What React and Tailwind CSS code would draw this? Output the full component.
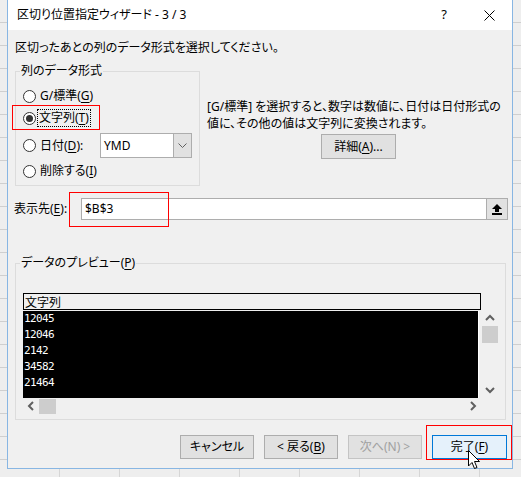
import React from "react";

const jp = "font-['Noto_Sans','Noto_Sans_CJK_JP',sans-serif]";

function Radio({ checked }) {
  return (
    <span className="w-[13px] h-[13px] rounded-full border border-[#333] bg-white flex items-center justify-center shrink-0">
      {checked && <span className="w-[7px] h-[7px] rounded-full bg-[#333]" />}
    </span>
  );
}

function U({ children }) {
  return <span className="underline underline-offset-[2px] decoration-[1px]">{children}</span>;
}

function Chevron({ dir, className = "" }) {
  const paths = {
    up: "M1 6 L5 2 L9 6",
    down: "M1 2 L5 6 L9 2",
    left: "M6 1 L2 5 L6 9",
    right: "M2 1 L6 5 L2 9",
  };
  const vb = dir === "up" || dir === "down" ? "0 0 10 8" : "0 0 8 10";
  const w = dir === "up" || dir === "down" ? 10 : 8;
  const h = dir === "up" || dir === "down" ? 8 : 10;
  return (
    <svg width={w} height={h} viewBox={vb} className={className}>
      <path d={paths[dir]} fill="none" stroke="#606060" strokeWidth="2" />
    </svg>
  );
}

export default function App() {
  const rows = ["12045", "12046", "2142", "34582", "21464"];
  return (
    <div
      className={`w-[521px] h-[477px] overflow-hidden pl-[7px] bg-[#eeeeee] bg-[repeating-linear-gradient(to_bottom,transparent_0px,transparent_22px,#cfcfcf_22px,#cfcfcf_23px),repeating-linear-gradient(to_right,transparent_0px,transparent_59px,#d6d6d6_59px,#d6d6d6_60px)] ${jp} text-[12px] text-black [font-feature-settings:'palt']`}
    >
      <div className="relative w-[506px] h-[469px] flex flex-col border-x border-b border-[#88b6e3]">
        {/* title bar */}
        <div className="h-[30px] bg-white flex items-center shrink-0">
          <span className="pl-[9px] leading-[16px]">区切り位置指定ウィザード - 3 / 3</span>
          <span className="ml-auto w-[46px] h-[30px] flex items-center justify-center text-[13px]">?</span>
          <span className="w-[45px] h-[30px] flex items-center justify-center">
            <svg width="11" height="11" viewBox="0 0 11 11">
              <path d="M0.5 0.5 L10.5 10.5 M10.5 0.5 L0.5 10.5" stroke="#000" strokeWidth="1" />
            </svg>
          </span>
        </div>

        {/* body */}
        <div className="flex-1 bg-[#f0f0f0] flex flex-col">
          <div className="mt-[10px] ml-[7px] h-[16px] leading-[16px]">
            区切ったあとの列のデータ形式を選択してください。
          </div>

          {/* top section */}
          <div className="flex mt-[7px]">
            <fieldset className="ml-[7px] w-[185px] h-[123px] border border-[#dcdcdc] m-0 p-0 min-w-0">
              <legend className="ml-[4px] px-[1px] leading-[16px] h-[16px]">列のデータ形式</legend>
              <div className="mt-[7px] h-[20px] flex items-center pl-[7px]">
                <Radio />
                <span className="ml-[4px] leading-[16px]">
                  G/標準(<U>G</U>)
                </span>
              </div>
              <div className="relative mt-[2px] h-[20px] flex items-center pl-[7px]">
                <Radio checked />
                <span className="ml-[2px] px-[1px] leading-[16px] outline outline-1 outline-dotted outline-[#000] outline-offset-[0px]">
                  文字列(<U>T</U>)
                </span>
                <span className="absolute left-[-4px] top-[-3px] w-[88px] h-[25px] border border-[#ff0000]" />
              </div>
              <div className="mt-[5px] h-[25px] flex items-center pl-[7px]">
                <Radio />
                <span className="ml-[4px] w-[60px] leading-[16px]">
                  日付(<U>D</U>):
                </span>
                <div className="w-[92px] h-[25px] bg-white border border-[#adadad] flex items-center">
                  <span className="pl-[3px] flex-1 leading-[16px]">YMD</span>
                  <span className="w-[18px] h-[23px] bg-[#e1e1e1] border-l border-[#adadad] flex items-center justify-center">
                    <svg width="9" height="6" viewBox="0 0 9 6">
                      <path d="M0.5 0.5 L4.5 4.5 L8.5 0.5" fill="none" stroke="#606060" strokeWidth="1" />
                    </svg>
                  </span>
                </div>
              </div>
              <div className="mt-[3px] h-[20px] flex items-center pl-[7px]">
                <Radio />
                <span className="ml-[4px] leading-[16px]">
                  削除する(<U>I</U>)
                </span>
              </div>
            </fieldset>

            <div className="flex-1 pl-[7px] flex flex-col">
              <div className="mt-[35px] leading-[17px]">
                <div>[G/標準] を選択すると、数字は数値に、日付は日付形式の</div>
                <div>値に、その他の値は文字列に変換されます。</div>
              </div>
              <button className="mt-[2px] ml-[114px] w-[75px] h-[25px] bg-[#e1e1e1] border border-[#adadad] flex items-center justify-center leading-[16px]">
                詳細(<U>A</U>)...
              </button>
            </div>
          </div>

          {/* destination */}
          <div className="mt-[12px] h-[22px] flex items-center">
            <span className="pl-[6px] w-[73px] leading-[16px]">
              表示先(<U>E</U>):
            </span>
            <div className="relative w-[427px] h-[22px] bg-white border border-[#adadad] flex items-center">
              <span className="pl-[3px] flex-1 leading-[16px]">$B$3</span>
              <span className="w-[21px] h-[20px] bg-[#e1e1e1] border-l border-[#adadad] flex items-center justify-center">
                <svg width="10" height="11" viewBox="0 0 10 11">
                  <polygon points="0,5 5,0 10,5" fill="#000" />
                  <rect x="3" y="5" width="4" height="3" fill="#000" />
                  <rect x="0" y="9" width="10" height="2" fill="#000" />
                </svg>
              </span>
              <span className="absolute left-[-13px] top-[-7px] w-[100px] h-[35px] border border-[#ff0000]" />
            </div>
          </div>

          {/* preview */}
          <fieldset className="mt-[35px] ml-[7px] w-[491px] h-[165px] border border-[#dcdcdc] m-0 p-0 min-w-0">
            <legend className="ml-[4px] px-[1px] leading-[16px] h-[16px]">
              データのプレビュー(<U>P</U>)
            </legend>
            <div className="mt-[22px] ml-[7px] flex">
              <div className="w-[458px] flex flex-col">
                <div className="h-[17px] border-t border-x border-b border-black flex items-center pl-[1px] leading-[14px] [font-feature-settings:normal] font-['Noto_Sans_CJK_JP',sans-serif]">
                  文字列
                </div>
                <div className="h-[87px] mt-[1px] flex">
                  <div className="w-[455px] bg-black flex flex-col pl-[1px] font-['DejaVu_Sans_Mono',monospace] text-[11px] tracking-[-0.6px] text-white">
                    {rows.map((r) => (
                      <div key={r} className="h-[16px] leading-[16px]">
                        {r}
                      </div>
                    ))}
                  </div>
                  <div className="w-[1px] bg-white" />
                </div>
                <div className="h-[16px] flex items-center">
                  <span className="w-[16px] h-[16px] flex items-center justify-center">
                    <Chevron dir="left" />
                  </span>
                  <span className="w-[17px] h-[15px] bg-[#cdcdcd]" />
                  <span className="flex-1" />
                  <span className="w-[16px] h-[16px] flex items-center justify-center">
                    <Chevron dir="right" />
                  </span>
                </div>
              </div>
              <div className="ml-[1px] w-[16px] mt-[17px] h-[88px] flex flex-col">
                <span className="h-[16px] flex items-center justify-center">
                  <Chevron dir="up" />
                </span>
                <span className="h-[17px] bg-[#cdcdcd]" />
                <span className="flex-1" />
                <span className="h-[16px] flex items-center justify-center">
                  <Chevron dir="down" />
                </span>
              </div>
            </div>
          </fieldset>

          {/* buttons */}
          <div className="mt-[15px] h-[24px] flex ml-[172px] gap-[10px]">
            <button className="w-[74px] h-[24px] bg-[#e1e1e1] border border-[#adadad] leading-[16px]">
              キャンセル
            </button>
            <button className="w-[74px] h-[24px] bg-[#e1e1e1] border border-[#adadad] leading-[16px]">
              &lt; 戻る(<U>B</U>)
            </button>
            <button className="w-[74px] h-[24px] bg-[#e1e1e1] border border-[#c4c4c4] text-[#a0a0a0] leading-[16px]">
              次へ(N) &gt;
            </button>
            <button className="relative w-[75px] h-[24px] bg-[#e5f1fb] border border-[#0078d7] leading-[16px]">
              完了(<U>F</U>)
              <span className="absolute left-[-7px] top-[-11px] w-[86px] h-[35px] border border-[#ff0000]" />
              <svg
                className="absolute left-[35px] top-[14px]"
                width="13"
                height="20"
                viewBox="0 0 13 20"
              >
                <path
                  d="M0.5 0.5 L0.5 16 L4 12.5 L6.5 18.5 L9 17.5 L6.5 11.5 L11.5 11.5 Z"
                  fill="#fff"
                  stroke="#000"
                  strokeWidth="1"
                />
              </svg>
            </button>
          </div>
        </div>
      </div>
    </div>
  );
}
